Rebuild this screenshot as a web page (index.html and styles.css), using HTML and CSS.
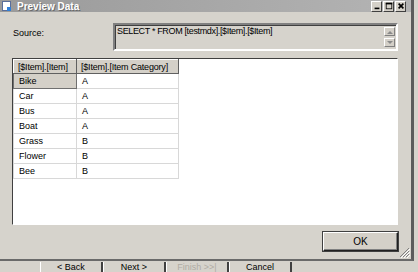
FILE: index.html
```html
<!DOCTYPE html>
<html lang="en">
<head>
    <meta charset="UTF-8">
    <title>Preview Data</title>
    <link rel="stylesheet" href="styles.css">
</head>
<body>
    <div class="window">
        <div class="titlebar">
            <svg class="app-icon" width="10" height="10" viewBox="0 0 10 10">
                <rect x="0.5" y="0.5" width="8" height="9" fill="#ffffff" stroke="#5a6e9a"/>
                <rect x="5" y="6" width="4" height="4" fill="#2f7fd8"/>
            </svg>
            <span class="title">Preview Data</span>
            <div class="controls">
                <span class="ctl">
                    <svg width="10" height="10" viewBox="0 0 10 10"><rect x="2" y="7" width="6" height="2" fill="#000"/></svg>
                </span>
                <span class="ctl">
                    <svg width="10" height="10" viewBox="0 0 10 10"><rect x="1.5" y="1.5" width="7" height="7" fill="none" stroke="#000"/><rect x="1" y="1" width="8" height="2" fill="#000"/></svg>
                </span>
                <span class="ctl">
                    <svg width="10" height="10" viewBox="0 0 10 10"><path d="M2 2 L8 8 M8 2 L2 8" stroke="#000" stroke-width="2"/></svg>
                </span>
            </div>
        </div>

        <div class="content">
            <div class="source-row">
                <span class="label">Source:</span>
                <div class="query">
                    <span class="query-text">SELECT * FROM [testmdx].[$Item].[$Item]</span>
                    <div class="spin">
                        <span class="spin-btn">
                            <svg width="6" height="4" viewBox="0 0 6 4"><path d="M0 4 L3 1 L6 4 Z" fill="#8a8a8a"/></svg>
                        </span>
                        <span class="spin-btn">
                            <svg width="6" height="4" viewBox="0 0 6 4"><path d="M0 0 L3 3 L6 0 Z" fill="#8a8a8a"/></svg>
                        </span>
                    </div>
                </div>
            </div>

            <div class="grid">
                <table class="data">
                    <thead>
                        <tr><th class="col-item">[$Item].[Item]</th><th class="col-cat">[$Item].[Item Category]</th></tr>
                    </thead>
                    <tbody>
                        <tr><td class="selected">Bike</td><td>A</td></tr>
                        <tr><td>Car</td><td>A</td></tr>
                        <tr><td>Bus</td><td>A</td></tr>
                        <tr><td>Boat</td><td>A</td></tr>
                        <tr><td>Grass</td><td>B</td></tr>
                        <tr><td>Flower</td><td>B</td></tr>
                        <tr><td>Bee</td><td>B</td></tr>
                    </tbody>
                </table>
            </div>

            <div class="footer">
                <button class="ok">OK</button>
            </div>
        </div>

        <svg class="grip" width="11" height="11" viewBox="0 0 11 11">
            <path d="M10 1 L1 10 M10 4 L4 10 M10 7 L7 10" stroke="#808080" stroke-width="1"/>
            <path d="M11 2 L2 11 M11 5 L5 11 M11 8 L8 11" stroke="#ffffff" stroke-width="1"/>
        </svg>
    </div>

    <div class="behind">
        <span class="wiz">&lt; Back</span>
        <span class="wiz">Next &gt;</span>
        <span class="wiz disabled">Finish &gt;&gt;|</span>
        <span class="wiz">Cancel</span>
    </div>
</body>
</html>
```

FILE: styles.css
```css
body {
    margin: 0;
    width: 418px;
    height: 272px;
    overflow: hidden;
    background-color: #d6d3cc;
    font-family: "Liberation Sans", Arial, sans-serif;
    font-size: 9px;
    color: #000;
}
.window {
    position: relative;
    width: 411px;
    height: 259px;
    background-color: #d6d3cc;
    border-right: 3px solid #5c5c5c;
    border-bottom: 2px solid #6a6a6a;
}
.titlebar {
    display: flex;
    align-items: center;
    height: 12px;
    padding-left: 2px;
    background: linear-gradient(to right, #9a9a9a, #b4b4b4);
}
.app-icon {
    margin-right: 5px;
}
.title {
    color: #ffffff;
    font-weight: bold;
    font-size: 10px;
    text-shadow: 1px 1px 0 #6a6a6a;
}
.controls {
    display: flex;
    gap: 1px;
    margin-left: auto;
    margin-right: 5px;
}
.ctl {
    display: flex;
    align-items: center;
    justify-content: center;
    width: 11px;
    height: 11px;
    background-color: #d4d0c8;
    border: 1px solid;
    border-color: #ffffff #404040 #404040 #ffffff;
    box-sizing: border-box;
}
.ctl svg {
    width: 8px;
    height: 8px;
}
.content {
    padding: 11px 12px 0 12px;
}
.source-row {
    display: flex;
    align-items: flex-start;
}
.label {
    width: 100px;
    padding-top: 5px;
    padding-left: 1px;
}
.query {
    display: flex;
    justify-content: space-between;
    width: 285px;
    height: 28px;
    box-sizing: border-box;
    border: 2px solid;
    border-color: #808080 #ffffff #ffffff #808080;
    box-shadow: inset 1px 1px 0 #404040;
    padding: 1px 1px 0 2px;
}
.query-text {
    letter-spacing: -0.35px;
}
.spin {
    display: flex;
    flex-direction: column;
    gap: 2px;
    padding-top: 1px;
}
.spin-btn {
    display: flex;
    align-items: center;
    justify-content: center;
    width: 11px;
    height: 9px;
    box-sizing: border-box;
    background-color: #d4d0c8;
    border: 1px solid;
    border-color: #ffffff #808080 #808080 #ffffff;
}
.grid {
    margin-top: 7px;
    width: 386px;
    height: 167px;
    box-sizing: border-box;
    background-color: #ffffff;
    border: 1px solid;
    border-color: #404040 #ffffff #ffffff #404040;
}
.data {
    border-collapse: collapse;
}
.data th {
    height: 13px;
    padding: 0 4px;
    text-align: left;
    font-weight: normal;
    background-color: #d4d0c8;
    border: 1px solid;
    border-color: #ffffff #606060 #606060 #ffffff;
    letter-spacing: -0.2px;
}
.col-item {
    width: 54px;
}
.col-cat {
    width: 93px;
}
.data td {
    height: 14px;
    padding: 0 5px;
    border: 1px solid #d8d8d8;
}
.data td.selected {
    background-color: #d4d0c8;
    border: 1px solid #707070;
}
.footer {
    display: flex;
    justify-content: flex-end;
    margin-top: 7px;
    margin-right: 1px;
}
.ok {
    width: 75px;
    height: 19px;
    font-family: "Liberation Sans", Arial, sans-serif;
    font-size: 10px;
    background-color: #d4d0c8;
    border: 1px solid;
    border-color: #ffffff #202020 #202020 #ffffff;
    box-shadow: inset -1px -1px 0 #808080, 0 0 0 1px #404040;
    padding: 0;
}
.grip {
    position: absolute;
    right: 1px;
    bottom: 1px;
}
.behind {
    display: flex;
    padding-left: 40px;
    margin-top: 1px;
    height: 11px;
    background-color: #d6d3cc;
}
.wiz {
    width: 60px;
    border-left: 1px solid #ffffff;
    border-right: 2px solid #404040;
    text-align: center;
    font-size: 9px;
    line-height: 10px;
}
.wiz.disabled {
    color: #b0aca4;
}
```
